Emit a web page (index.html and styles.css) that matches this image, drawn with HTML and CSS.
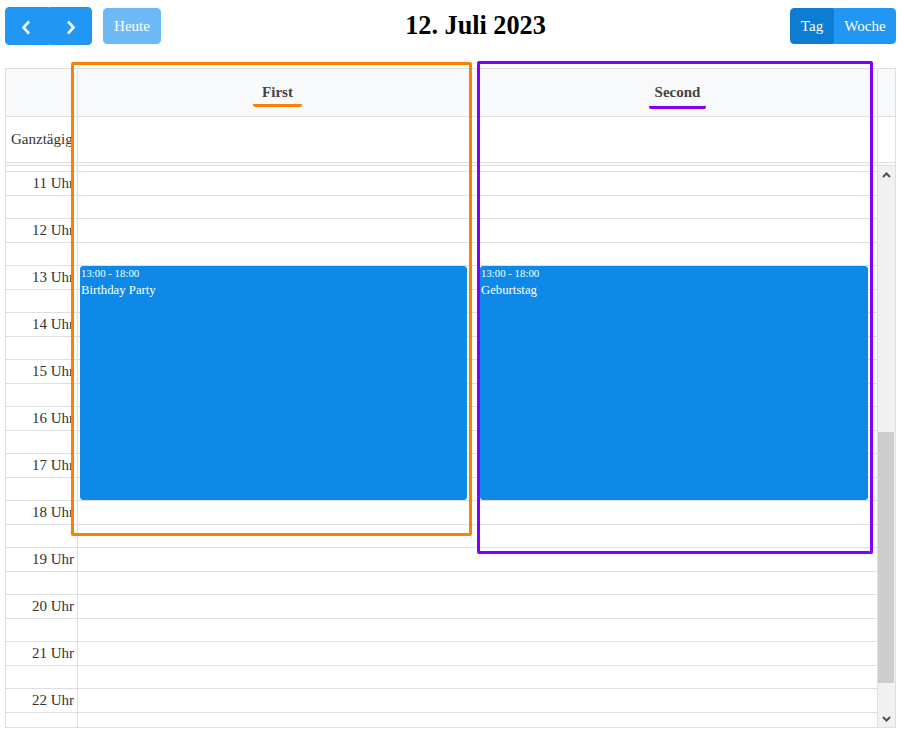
FILE: index.html
```html
<!DOCTYPE html>
<html lang="de">
<head>
<meta charset="utf-8">
<title>Kalender</title>
<link rel="stylesheet" href="styles.css">
</head>
<body>
<div class="cal">
  <div class="toolbar">
    <div class="tb-left">
      <div class="btn-group">
        <button class="btn btn-icon" aria-label="Zurück"><svg width="11" height="15" viewBox="0 0 11 15"><polyline points="8,1.5 2.5,7.5 8,13.5"/></svg></button>
        <button class="btn btn-icon" aria-label="Weiter"><svg width="11" height="15" viewBox="0 0 11 15"><polyline points="3,1.5 8.5,7.5 3,13.5"/></svg></button>
      </div>
      <button class="btn btn-disabled">Heute</button>
    </div>
    <h2 class="title">12. Juli 2023</h2>
    <div class="btn-group">
      <button class="btn btn-active">Tag</button>
      <button class="btn btn-week">Woche</button>
    </div>
  </div>

  <div class="grid">
    <div class="row head">
      <div class="cell axis"></div>
      <div class="cell res res-a"><span class="res-name res-first">First</span></div>
      <div class="cell res"><span class="res-name res-second">Second</span></div>
      <div class="cell gutter"></div>
    </div>
    <div class="row allday">
      <div class="cell axis allday-label">Ganztägig</div>
      <div class="cell res res-a"></div>
      <div class="cell res"></div>
      <div class="cell gutter"></div>
    </div>
    <div class="row divider">
      <div class="cell axis"></div>
      <div class="cell res res-a"></div>
      <div class="cell res"></div>
      <div class="cell gutter"></div>
    </div>
    <div class="body">
      <div class="timegrid">
        <div class="slots">
          <div class="slot slot-partial"></div>
          <div class="slot"><div class="slot-label">11 Uhr</div></div>
          <div class="slot"><div class="slot-label"></div></div>
          <div class="slot"><div class="slot-label">12 Uhr</div></div>
          <div class="slot"><div class="slot-label"></div></div>
          <div class="slot"><div class="slot-label">13 Uhr</div></div>
          <div class="slot"><div class="slot-label"></div></div>
          <div class="slot"><div class="slot-label">14 Uhr</div></div>
          <div class="slot"><div class="slot-label"></div></div>
          <div class="slot"><div class="slot-label">15 Uhr</div></div>
          <div class="slot"><div class="slot-label"></div></div>
          <div class="slot"><div class="slot-label">16 Uhr</div></div>
          <div class="slot"><div class="slot-label"></div></div>
          <div class="slot"><div class="slot-label">17 Uhr</div></div>
          <div class="slot"><div class="slot-label"></div></div>
          <div class="slot"><div class="slot-label">18 Uhr</div></div>
          <div class="slot"><div class="slot-label"></div></div>
          <div class="slot"><div class="slot-label">19 Uhr</div></div>
          <div class="slot"><div class="slot-label"></div></div>
          <div class="slot"><div class="slot-label">20 Uhr</div></div>
          <div class="slot"><div class="slot-label"></div></div>
          <div class="slot"><div class="slot-label">21 Uhr</div></div>
          <div class="slot"><div class="slot-label"></div></div>
          <div class="slot"><div class="slot-label">22 Uhr</div></div>
          <div class="slot"><div class="slot-label"></div></div>
        </div>
        <div class="cols">
          <div class="col col-axis"></div>
          <div class="col col-a">
            <div class="event">
              <div class="event-time">13:00 - 18:00</div>
              <div class="event-title">Birthday Party</div>
            </div>
          </div>
          <div class="col col-b">
            <div class="event">
              <div class="event-time">13:00 - 18:00</div>
              <div class="event-title">Geburtstag</div>
            </div>
          </div>
        </div>
      </div>
      <div class="scrollbar">
        <div class="sb-btn"><svg width="9" height="6" viewBox="0 0 9 6"><polyline points="1,5 4.5,1.5 8,5"/></svg></div>
        <div class="sb-track"><div class="sb-thumb"></div></div>
        <div class="sb-btn"><svg width="9" height="6" viewBox="0 0 9 6"><polyline points="1,1 4.5,4.5 8,1"/></svg></div>
      </div>
    </div>
  </div>
</div>
<div class="mark mark-first"></div>
<div class="mark mark-second"></div>
</body>
</html>
```

FILE: styles.css
```css
html, body {
  margin: 0;
  background: #fff;
}
body {
  padding: 7px 0 0 5px;
  font-family: "Liberation Serif", "Times New Roman", serif;
  font-size: 15px;
  color: #333;
}
.cal {
  width: 891px;
}
.toolbar {
  display: flex;
  align-items: center;
  justify-content: space-between;
  height: 38px;
  margin-bottom: 23px;
}
.tb-left {
  display: flex;
  align-items: center;
  gap: 11px;
}
.btn-group {
  display: flex;
}
.btn {
  box-sizing: border-box;
  height: 36px;
  padding: 0 9.75px;
  border: 1px solid #2196f3;
  background: #2196f3;
  color: #fff;
  font-family: "Liberation Serif", "Times New Roman", serif;
  font-size: 15px;
  line-height: 1;
  border-radius: 4px;
  display: inline-flex;
  align-items: center;
  justify-content: center;
  cursor: pointer;
}
.btn-group .btn {
  border-radius: 0;
}
.btn-group .btn:first-child {
  border-radius: 4px 0 0 4px;
}
.btn-group .btn:last-child {
  border-radius: 0 4px 4px 0;
}
.btn-icon {
  width: 43.5px;
  height: 38px;
  padding: 0;
  padding-top: 3px;
}
.btn-icon svg polyline {
  fill: none;
  stroke: #fff;
  stroke-width: 2.6;
}
.btn-disabled {
  opacity: 0.65;
  width: 58px;
  padding: 0;
}
.btn-active {
  background: #0d7dd3;
  border-color: #0d7dd3;
  width: 44px;
  padding: 0;
}
.btn-week {
  width: 62px;
  padding: 0;
}
.title {
  margin: 0;
  font-size: 26.25px;
  font-weight: bold;
  color: #000;
  line-height: 1;
}

.grid {
  box-sizing: border-box;
  width: 891px;
  border: 1px solid #dddfe3;
}
.row {
  display: grid;
  grid-template-columns: 72px 400px 400px 17px;
}
.cell {
  box-sizing: border-box;
  border-right: 1px solid #dddfe3;
}
.cell.gutter,
.cell.res-a {
  border-right: none;
}
.head {
  height: 48px;
  background: #f8f9fa;
  border-bottom: 1px solid #dddfe3;
  box-sizing: border-box;
}
.head .res {
  display: flex;
  justify-content: center;
  align-items: flex-start;
  padding-top: 12px;
}
.head .res-a {
  padding-right: 1px;
}
.res-name {
  font-weight: bold;
  color: #444;
  line-height: 22.5px;
  border-radius: 2px;
}
.res-first {
  padding: 0 9px;
  border-bottom: 3px solid #ff8000;
}
.res-second {
  padding: 0 6px 2px;
  border-bottom: 3px solid #8000ff;
}
.allday {
  height: 45px;
}
.allday-label {
  display: flex;
  align-items: center;
  padding-left: 5px;
  white-space: nowrap;
  overflow: hidden;
}
.divider {
  box-sizing: border-box;
  height: 4px;
  border-top: 1px solid #dddfe3;
  border-bottom: 1px solid #dddfe3;
  background: #fafafa;
}

.body {
  display: flex;
  height: 561px;
  overflow: hidden;
}
.timegrid {
  position: relative;
  width: 872px;
  flex: none;
}
.slot {
  box-sizing: border-box;
  height: 23.5px;
  border-top: 1px solid #dddfe3;
  display: flex;
}
.slot-partial {
  height: 5px;
  border-top: none;
}
.slot-label {
  box-sizing: border-box;
  width: 72px;
  padding-right: 4px;
  display: flex;
  align-items: center;
  justify-content: flex-end;
  white-space: nowrap;
  overflow: hidden;
  color: #333;
}
.cols {
  position: absolute;
  inset: 0;
  display: grid;
  grid-template-columns: 72px 400px 400px;
}
.col {
  position: relative;
  box-sizing: border-box;
  border-right: 1px solid #dddfe3;
}
.col-a {
  border-right: none;
}
.event {
  position: absolute;
  top: 100px;
  height: 234px;
  left: 2px;
  right: 10px;
  box-sizing: border-box;
  background: #0f89e8;
  border: 1px solid #0f89e8;
  border-radius: 3px;
  color: #fff;
  padding: 0;
  overflow: hidden;
}
.col-a .event {
  right: 11px;
}
.col-b .event {
  right: 9px;
}
.event-time {
  font-size: 10.8px;
  line-height: normal;
  margin-bottom: 4px;
  white-space: nowrap;
}
.event-title {
  font-size: 12.75px;
  line-height: normal;
}

.scrollbar {
  width: 17px;
  flex: none;
  display: flex;
  flex-direction: column;
  background: #f1f1f1;
}
.sb-btn {
  height: 17px;
  flex: none;
  display: flex;
  align-items: center;
  justify-content: center;
}
.sb-btn svg polyline {
  fill: none;
  stroke: #505050;
  stroke-width: 2;
}
.sb-track {
  flex: 1;
  display: flex;
  flex-direction: column;
}
.sb-thumb {
  margin-top: 249px;
  height: 251px;
  margin-right: 1px;
  background: #cdcdcd;
}

.mark {
  position: absolute;
  box-sizing: border-box;
  border: 3px solid;
  border-radius: 2px;
  pointer-events: none;
}
.mark-first {
  left: 71px;
  top: 62px;
  width: 401px;
  height: 474px;
  border-color: #ff8000;
}
.mark-second {
  left: 477px;
  top: 61px;
  width: 396px;
  height: 493px;
  border-color: #8000ff;
}
```
